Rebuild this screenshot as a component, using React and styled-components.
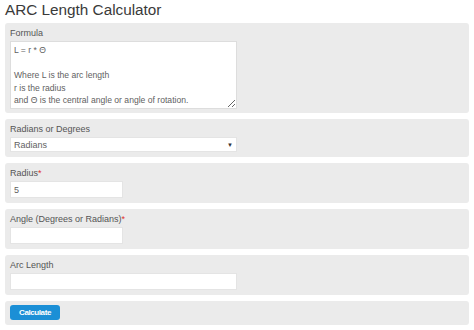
import React from "react";
import styled, { createGlobalStyle } from "styled-components";

const Global = createGlobalStyle`
  html, body { margin: 0; padding: 0; background: #fff; }
  body { font-family: "Liberation Sans", Arial, sans-serif; }
`;

const Page = styled.div`
  padding: 0 5px;
  width: 464px;
`;

const Title = styled.h1`
  margin: 0;
  height: 23px;
  line-height: 19px;
  font-size: 15.3px;
  font-weight: normal;
  color: #3a3a3a;
`;

const Form = styled.div`
  display: flex;
  flex-direction: column;
  gap: 6px;
`;

const Panel = styled.div`
  background: #ebebeb;
  border-radius: 3px;
  padding: 4px 5px ${(p) => (p.$tight ? "4px" : "5px")};
  display: flex;
  flex-direction: column;
  align-items: flex-start;
`;

const Label = styled.label`
  height: 14px;
  line-height: 13px;
  font-size: 9px;
  color: #555;
`;

const Req = styled.span`
  color: #e0312c;
`;

const TextArea = styled.textarea`
  box-sizing: border-box;
  width: 227px;
  height: 68px;
  margin: 0;
  padding: 2px 3px;
  border: 1px solid #ddd;
  background: #fff;
  font-family: "Liberation Sans", Arial, sans-serif;
  font-size: 8.6px;
  line-height: 12.5px;
  color: #5f5f5f;
  resize: vertical;
  overflow: hidden;
`;

const Select = styled.div`
  box-sizing: border-box;
  width: 227px;
  height: 15px;
  background: #fff;
  border: 1px solid #e4e4e4;
  display: flex;
  align-items: center;
  justify-content: space-between;
  padding: 0 3px;
  font-size: 9px;
  color: #5f5f5f;
`;

const Arrow = styled.span`
  font-size: 6px;
  color: #333;
`;

const Input = styled.div`
  box-sizing: border-box;
  width: ${(p) => (p.$wide ? "227px" : "113px")};
  height: 17px;
  background: #fff;
  border: 1px solid #e4e4e4;
  display: flex;
  align-items: center;
  padding: 0 3px;
  font-size: 9px;
  color: #5f5f5f;
`;

const Button = styled.button`
  box-sizing: border-box;
  width: 50px;
  height: 15px;
  border: none;
  border-radius: 3px;
  background: #1b8fd6;
  color: #fff;
  font-family: "Liberation Sans", Arial, sans-serif;
  font-size: 8px;
  font-weight: bold;
  letter-spacing: -0.4px;
  padding: 0;
`;

const formula = `L = r * Θ

Where L is the arc length
r is the radius
and Θ is the central angle or angle of rotation.`;

export default function App() {
  return (
    <Page>
      <Global />
      <Title>ARC Length Calculator</Title>
      <Form>
        <Panel $tight>
          <Label>Formula</Label>
          <TextArea readOnly value={formula} />
        </Panel>
        <Panel>
          <Label>Radians or Degrees</Label>
          <Select>
            <span>Radians</span>
            <Arrow>▼</Arrow>
          </Select>
        </Panel>
        <Panel>
          <Label>
            Radius<Req>*</Req>
          </Label>
          <Input>5</Input>
        </Panel>
        <Panel>
          <Label>
            Angle (Degrees or Radians)<Req>*</Req>
          </Label>
          <Input />
        </Panel>
        <Panel>
          <Label>Arc Length</Label>
          <Input $wide />
        </Panel>
        <Panel>
          <Button>Calculate</Button>
        </Panel>
      </Form>
    </Page>
  );
}
